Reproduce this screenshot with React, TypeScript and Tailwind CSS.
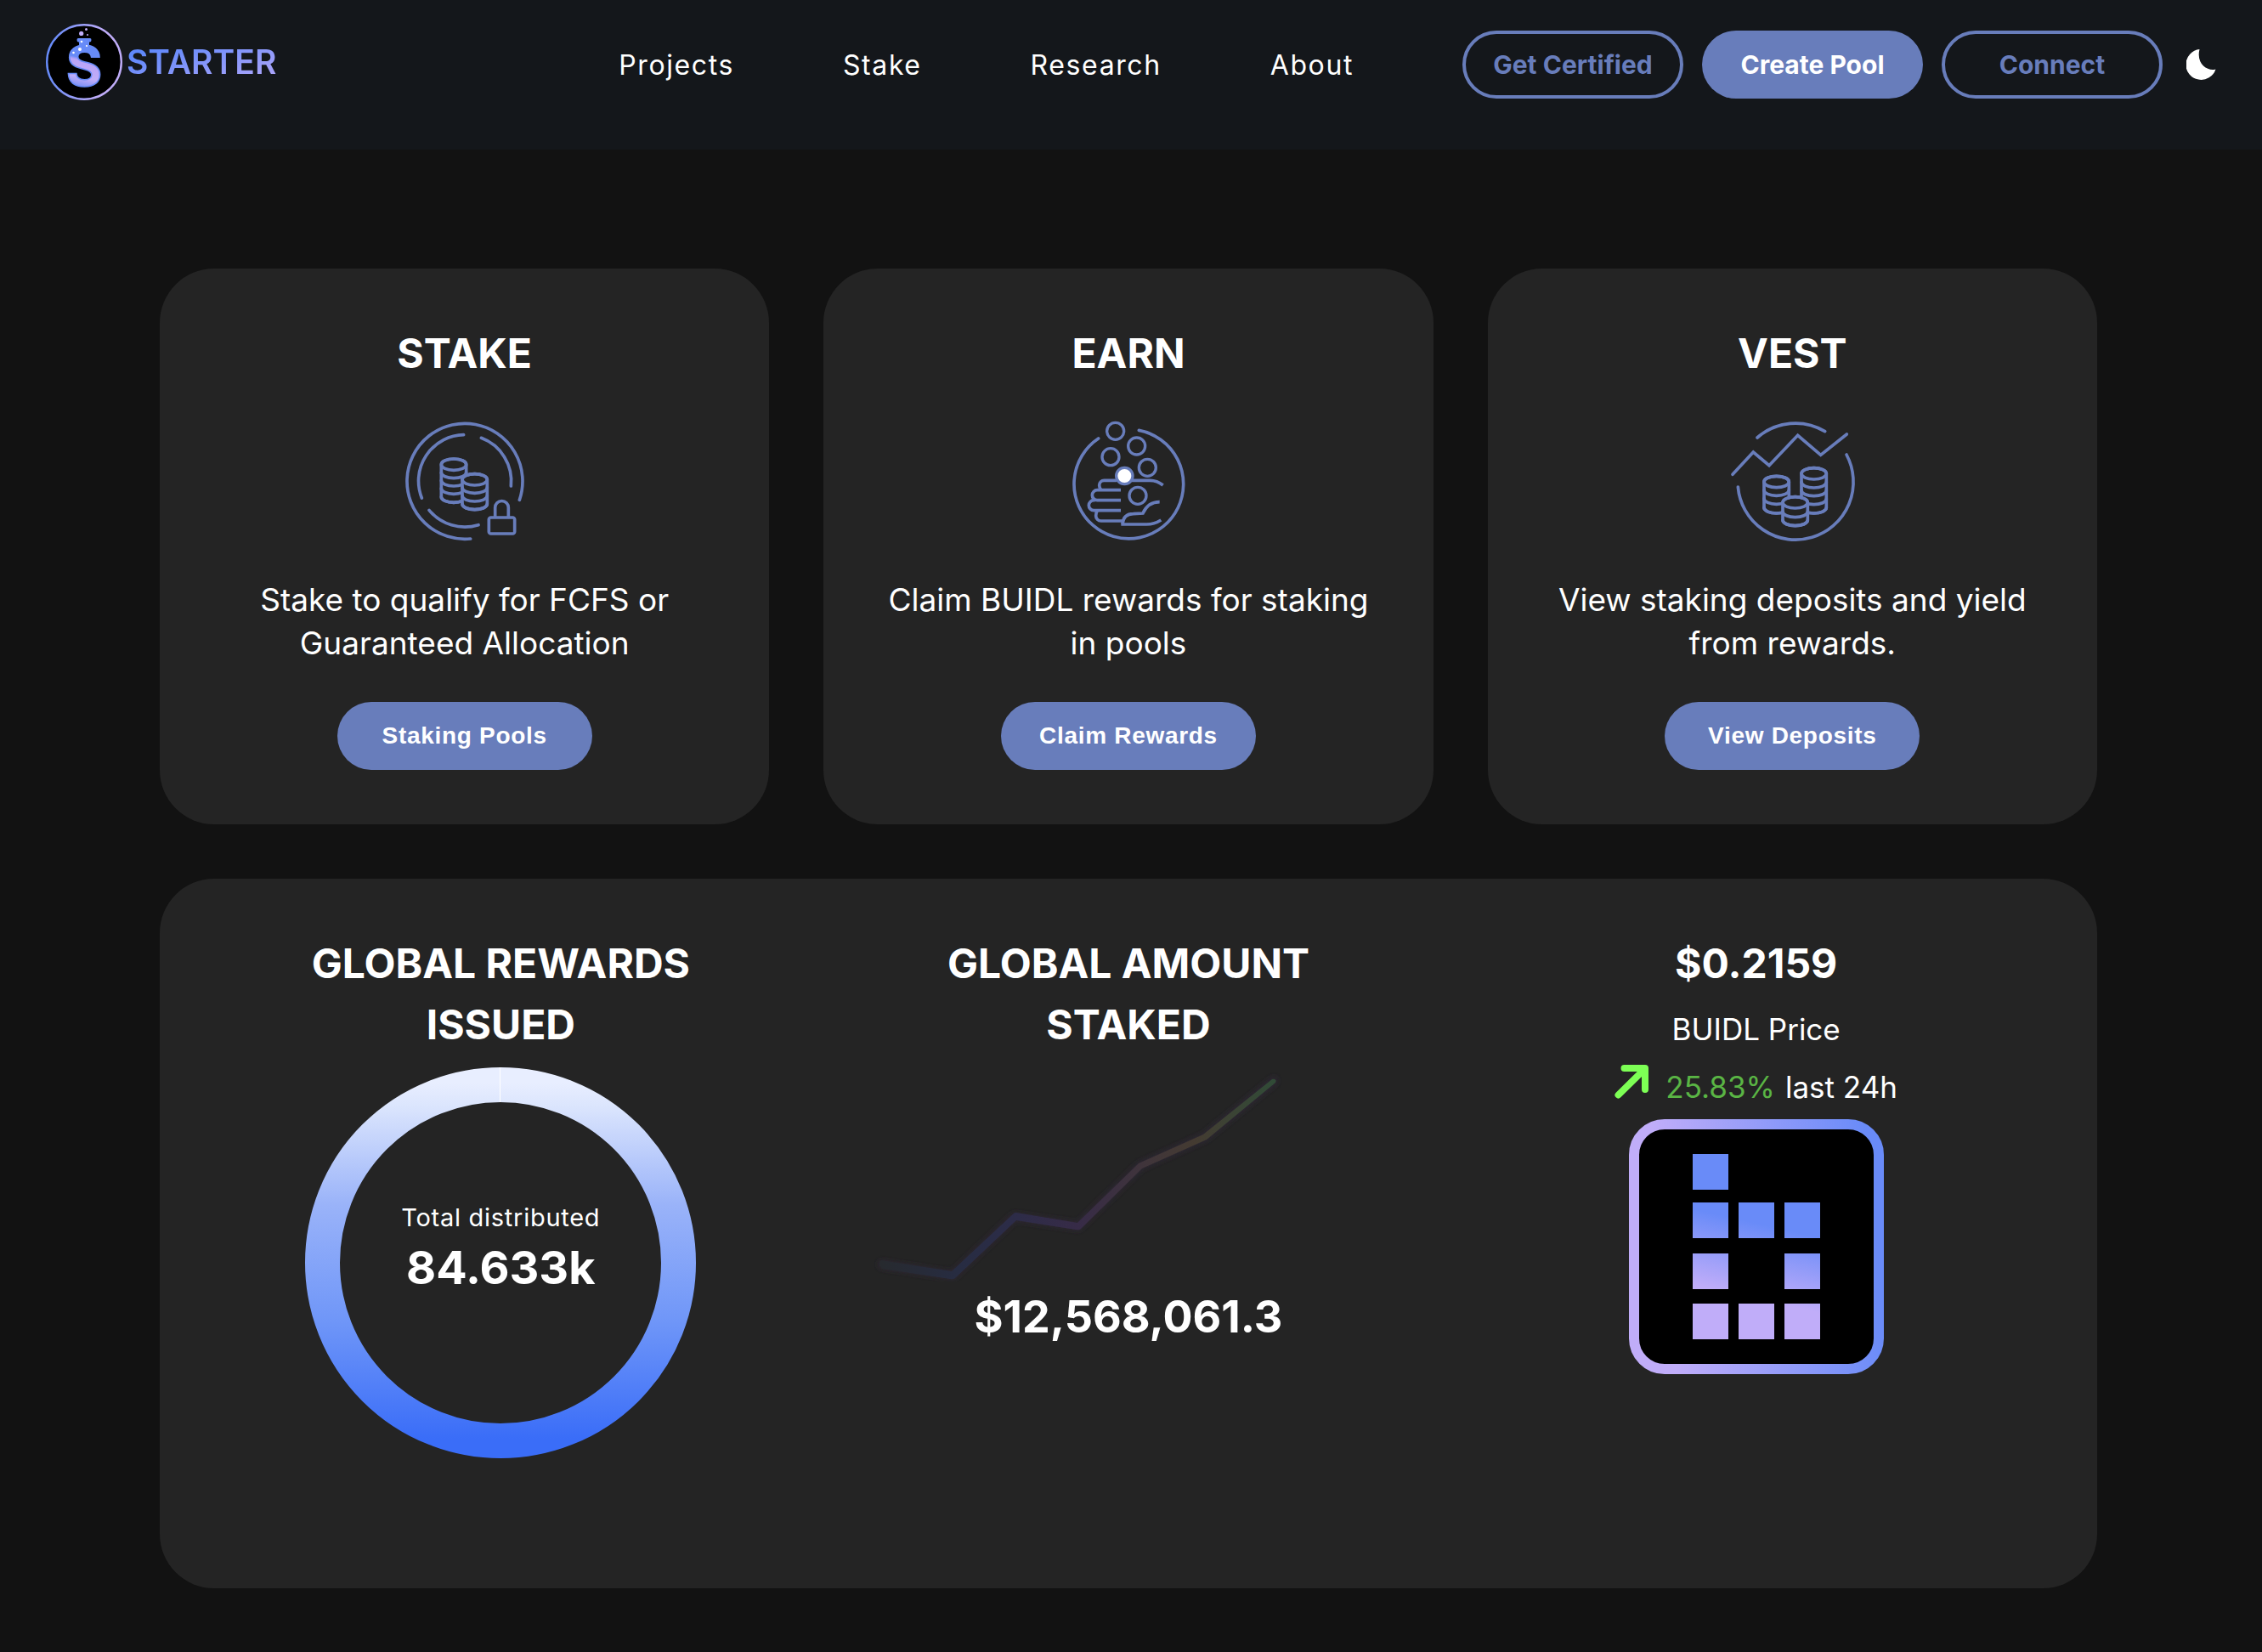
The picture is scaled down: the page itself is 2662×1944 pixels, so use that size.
import type { ReactNode } from "react";

const NAV_LINKS = ["Projects", "Stake", "Research", "About"];

function Logo() {
  return (
    <a href="#home" className="flex items-center gap-[5px]" aria-label="Starter home">
      <svg viewBox="0 0 90 90" className="size-[90px] overflow-visible" aria-hidden="true">
        <defs>
          <linearGradient id="logo-ring" x1="0" x2="1" y1="0.3" y2="0.4">
            <stop offset="0.05" stopColor="#678bf8" />
            <stop offset="0.75" stopColor="#c0adf9" />
          </linearGradient>
          <linearGradient id="logo-fill" gradientUnits="userSpaceOnUse" x1="50" x2="38.200" y1="20" y2="73">
            <stop offset="0.39" stopColor="#678bf8" />
            <stop offset="0.45" stopColor="#b9a3f8" />
            <stop offset="0.8" stopColor="#c0adf9" />
            <stop offset="1" stopColor="#7f92f6" />
          </linearGradient>
        </defs>
        <circle cx="45" cy="45" r="43.8" fill="#000" stroke="url(#logo-ring)" strokeWidth="2.4" />
        <text
          x="45"
          y="73"
          textAnchor="middle"
          fontFamily="Inter"
          fontWeight="700"
          fontSize="65"
          fill="url(#logo-fill)"
          stroke="#678bf8"
          strokeWidth="1.6"
        >
          S
        </text>
        <path d="M38 17h14q1.500 0 1.500 2t-1.500 2.500h-1v7H39v-7h-1q-1.500-.5-1.500-2.500T38 17Z" fill="#678bf8" />
        <g fill="#c0adf9">
          <circle cx="41.700" cy="11.400" r="2.600" />
          <circle cx="47.500" cy="6.400" r="1.500" />
          <circle cx="49" cy="13" r="1" />
        </g>
        <g fill="#fff">
          <circle cx="42" cy="21" r="1.300" />
          <circle cx="48" cy="26" r="1.100" />
          <circle cx="40" cy="30" r="2" />
          <circle cx="32.500" cy="34" r="1.300" />
        </g>
      </svg>
      <span className="bg-linear-to-br from-[#5f88fb] from-20% to-[#b7a8f9] bg-clip-text text-[39px] leading-[60px] font-semibold text-transparent">
        STARTER
      </span>
    </a>
  );
}

type StackProps = { cx: number; cy: number; bottoms: number[] };

/* A pile of coins: a top face plus one curved edge per coin below it. */
function CoinStack({ cx, cy, bottoms }: StackProps) {
  const left = cx - 44;
  const right = cx + 44;
  const base = bottoms[bottoms.length - 1] - 20;
  return (
    <g>
      <path d={`M${left} ${cy}V${base}A44 20 0 0 0 ${right} ${base}V${cy}A44 20 0 0 0 ${left} ${cy}`} fill="#242424" />
      <ellipse cx={cx} cy={cy} rx="44" ry="20" />
      {bottoms.map((b) => (
        <path key={b} d={`M${left} ${b - 20}A44 20 0 0 0 ${right} ${b - 20}`} />
      ))}
    </g>
  );
}

function StakeIcon() {
  return (
    <svg viewBox="111 378 420 420" className="h-[140px] w-[140px] overflow-visible" fill="none" stroke="#687dbb" strokeWidth="11" strokeLinecap="round" aria-hidden="true">
      <path d="M514 655A204 204 0 1 0 341 792" />
      <path d="M317 425A163 163 0 0 0 169 648" />
      <path d="M379 436A163 163 0 0 1 484 606" />
      <path d="M195 691A163 163 0 0 0 369 743" />
      <CoinStack cx={282} cy={530} bottoms={[578, 606, 634, 664]} />
      <CoinStack cx={356} cy={583} bottoms={[631, 660, 689]} />
      <path d="M428 715v-33a23.500 23.500 0 0 1 47 0v33" />
      <rect x="406" y="717" width="91" height="57" rx="7" />
    </svg>
  );
}

function EarnIcon() {
  return (
    <svg viewBox="126 378 396 420" className="h-[140px] w-[132px] overflow-visible" fill="none" stroke="#687dbb" strokeWidth="11" aria-hidden="true">
      <path d="M218 438A193 193 0 1 0 361 409" strokeLinecap="round" />
      <path d="M282 586H238A17 17 0 0 0 221 603Q221 612 227 620" />
      <path d="M297 620H214A18 18 0 0 0 214 656H297" />
      <path d="M206 656H202A18 18 0 0 0 202 692H297" />
      <path d="M214 692Q209 700 209 711A18 18 0 0 0 227 729H306" />
      <path d="M336 586H400Q425 586 446 603" />
      <path d="M303 740C305 718 317 704 341 704L375 702C385 680 404 662 434 662" />
      <path d="M298 741H388Q415 741 439 726" />
      <g strokeWidth="10">
        <circle cx="278" cy="412" r="30" />
        <circle cx="353" cy="465" r="30" />
        <circle cx="261" cy="503" r="30" />
        <circle cx="391" cy="541" r="30" />
        <circle cx="357" cy="640" r="30" />
        <circle cx="310" cy="570" r="29" fill="#fff" />
      </g>
    </svg>
  );
}

function VestIcon() {
  return (
    <svg viewBox="111 378 435 420" className="h-[140px] w-[145px] overflow-visible" fill="none" stroke="#687dbb" strokeWidth="11" strokeLinecap="round" aria-hidden="true">
      <path d="M204 435A204 204 0 0 1 443 413" />
      <path d="M519 495A204 204 0 1 1 136 609" />
      <path d="M117 565L190 486L246 533L347 427L428 496L520 423" />
      <CoinStack cx={272} cy={591} bottoms={[640, 670, 702]} />
      <CoinStack cx={404} cy={562} bottoms={[612, 641, 671, 702]} />
      <CoinStack cx={338} cy={664} bottoms={[716, 746]} />
    </svg>
  );
}

type ActionProps = { title: string; text: ReactNode; action: string; icon: ReactNode };

function ActionCard({ title, text, action, icon }: ActionProps) {
  return (
    <section className="flex flex-col items-center rounded-[64px] bg-[#242424] px-8 py-16 text-center">
      <h2 className="text-[48px] leading-[72px] font-bold">{title}</h2>
      <div className="mt-11">{icon}</div>
      <p className="mt-11 text-[37px] leading-[51px]">{text}</p>
      <button
        type="button"
        className="mt-11 h-20 w-[300px] rounded-full bg-[#687dbb] font-['Liberation_Sans',sans-serif] text-[28px] font-bold tracking-wide"
      >
        {action}
      </button>
    </section>
  );
}

function RewardsRing() {
  return (
    <div className="mt-[14px] grid place-items-center">
      <svg viewBox="0 0 460 460" className="col-start-1 row-start-1 size-[460px]" aria-hidden="true">
        <defs>
          <linearGradient id="ring" gradientUnits="userSpaceOnUse" x1="0" x2="0" y1="0" y2="460">
            <stop offset="0.04" stopColor="#e8eeff" />
            <stop offset="0.1" stopColor="#dbe5fd" />
            <stop offset="0.35" stopColor="#9ab3f9" />
            <stop offset="0.65" stopColor="#6f96f8" />
            <stop offset="0.95" stopColor="#3a6df8" />
          </linearGradient>
        </defs>
        <circle cx="230" cy="230" r="209.500" fill="none" stroke="url(#ring)" strokeWidth="41" />
        <path d="M229.500 0V41" stroke="#fff" />
      </svg>
      <div className="col-start-1 row-start-1 pb-[30px] text-center">
        <p className="text-[29px] leading-[42px] tracking-wide">Total distributed</p>
        <p className="text-[54px] leading-[76px] font-bold">84.633k</p>
      </div>
    </div>
  );
}

function StakedChart() {
  return (
    <svg viewBox="1008 1242 640 266" className="h-[266px] w-[640px]" aria-hidden="true">
      <defs>
        <linearGradient id="trend" gradientUnits="userSpaceOnUse" x1="1038" x2="1499" y1="0" y2="0">
          <stop offset="0" stopColor="#272a2f" />
          <stop offset="0.2" stopColor="#272c42" />
          <stop offset="0.33" stopColor="#2c2c48" />
          <stop offset="0.5" stopColor="#372b47" />
          <stop offset="0.68" stopColor="#40353a" />
          <stop offset="0.8" stopColor="#443b31" />
          <stop offset="0.88" stopColor="#3c4234" />
          <stop offset="1" stopColor="#314b37" />
        </linearGradient>
        <filter id="glow" filterUnits="userSpaceOnUse" x="1008" y="1242" width="520" height="280">
          <feGaussianBlur stdDeviation="3" />
        </filter>
      </defs>
      <path d="M1038 1488L1121 1501L1194 1432L1269 1443L1342 1372L1418 1338L1499 1272" fill="none" stroke="#2d2634" strokeWidth="9" strokeLinecap="round" filter="url(#glow)" />
      <path
        d="M1037 1483L1120 1496L1193 1428Q1194 1427 1196 1427L1268 1439L1340 1369L1416 1335L1497 1270Q1503 1269 1501 1274L1420 1341L1344 1375L1272 1446Q1270 1448 1266 1447L1196 1436L1124 1504Q1122 1506 1118 1505L1038 1493Q1032 1487 1037 1483Z"
        fill="url(#trend)"
      />
    </svg>
  );
}

function BuidlLogo() {
  const cells = [
    [75, 41], [75, 98], [129, 98], [183, 98],
    [75, 158], [183, 158], [75, 217], [129, 217], [183, 217],
  ];
  return (
    <svg viewBox="0 0 300 300" className="mt-3 size-[300px]" aria-hidden="true">
      <defs>
        <linearGradient id="frame" x1="0" x2="1" y1="0.1" y2="0">
          <stop offset="0.08" stopColor="#c0adf9" />
          <stop offset="0.95" stopColor="#698bf8" />
        </linearGradient>
        <linearGradient id="cells" gradientUnits="userSpaceOnUse" x1="140" x2="121" y1="120" y2="205">
          <stop offset="0" stopColor="#698bf8" />
          <stop offset="1" stopColor="#c0adf9" />
        </linearGradient>
      </defs>
      <rect x="6" y="6" width="288" height="288" rx="36" fill="#000" stroke="url(#frame)" strokeWidth="12" />
      {cells.map(([x, y]) => (
        <rect key={`${x}-${y}`} x={x} y={y} width="42" height="42" fill="url(#cells)" />
      ))}
    </svg>
  );
}

export default function App() {
  return (
    <div className="min-h-screen bg-[#121212] font-[Inter,sans-serif] text-white">
      <header className="flex h-[176px] items-start bg-[#14171b] px-[54px] pt-7">
        <Logo />
        <nav className="ml-auto flex h-24 items-center gap-32 pr-32">
          {NAV_LINKS.map((label) => (
            <a key={label} href={`#${label.toLowerCase()}`} className="text-[32px] leading-[45px] tracking-wider">
              {label}
            </a>
          ))}
        </nav>
        <div className="flex h-24 items-center gap-[22px] text-[30px] font-bold text-[#687dbb]">
          <button type="button" className="h-20 w-[260px] rounded-full border-4 border-[#687dbb]">
            Get Certified
          </button>
          <button type="button" className="h-20 w-[260px] rounded-full bg-[#687dbb] text-white">
            Create Pool
          </button>
          <button type="button" className="h-20 w-[260px] rounded-full border-4 border-[#687dbb]">
            Connect
          </button>
          <button type="button" aria-label="Toggle dark mode" className="ml-[6px]">
            <svg viewBox="0 0 35 36" className="h-9 w-[35px]" fill="#fff" aria-hidden="true">
              <path d="M15.500 0A18 18 0 1 0 34.500 23.500C26 26.500 11 18 15.500 0Z" />
            </svg>
          </button>
        </div>
      </header>

      <main className="flex flex-col gap-16 pt-[140px] pr-[194px] pb-[75px] pl-[188px]">
        <div className="grid grid-cols-3 gap-16">
          <ActionCard
            title="STAKE"
            text={<>Stake to qualify for FCFS or<br />Guaranteed Allocation</>}
            action="Staking Pools"
            icon={<StakeIcon />}
          />
          <ActionCard
            title="EARN"
            text={<>Claim BUIDL rewards for staking<br />in pools</>}
            action="Claim Rewards"
            icon={<EarnIcon />}
          />
          <ActionCard
            title="VEST"
            text={<>View staking deposits and yield<br />from rewards.</>}
            action="View Deposits"
            icon={<VestIcon />}
          />
        </div>

        <section className="grid grid-cols-3 rounded-[64px] bg-[#242424] px-8 pt-16 pb-[153px] text-center">
          <div className="flex flex-col items-center">
            <h2 className="text-[48px] leading-[72px] font-bold">GLOBAL REWARDS<br />ISSUED</h2>
            <RewardsRing />
          </div>
          <div className="flex flex-col items-center">
            <h2 className="text-[48px] leading-[72px] font-bold">GLOBAL AMOUNT<br />STAKED</h2>
            <StakedChart />
            <p className="text-[52px] leading-[84px] font-bold">$12,568,061.3</p>
          </div>
          <div className="flex flex-col items-center">
            <h2 className="text-[48px] leading-[72px] font-bold">$0.2159</h2>
            <p className="mt-4 text-[35px] leading-[51px]">BUIDL Price</p>
            <p className="mt-4 flex items-center text-[35px] leading-[51px]">
              <svg viewBox="0 0 40 40" className="mr-5 mb-3 size-10" fill="none" stroke="#7dff55" strokeWidth="8" strokeLinecap="round" strokeLinejoin="round" aria-hidden="true">
                <path d="M4.500 35.500L36 4.500M11.500 4H36V29" />
              </svg>
              <span className="mr-3 text-[#5ab544]">25.83%</span>
              <span>last 24h</span>
            </p>
            <BuidlLogo />
          </div>
        </section>
      </main>
    </div>
  );
}
